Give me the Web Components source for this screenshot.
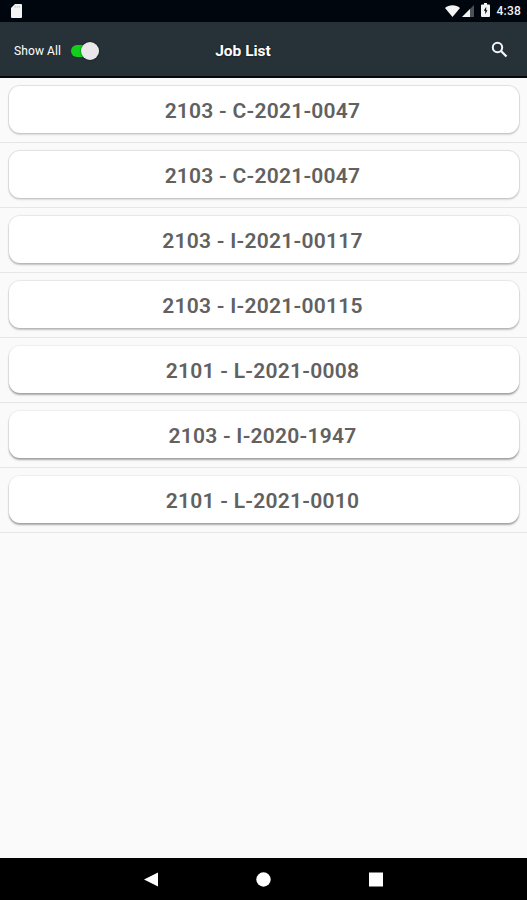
<!DOCTYPE html>
<html lang="en">
<head>
<meta charset="utf-8">
<title>Job List</title>
<style>
  html, body { margin: 0; height: 100%; }
  body { font-family: Roboto, sans-serif; background: #fafafa; overflow: hidden; }
</style>
</head>
<body>
<job-screen></job-screen>

<script>
function defineElement(name, html) {
  const template = document.createElement("template");
  template.innerHTML = html;

  customElements.define(name, class extends HTMLElement {
    constructor() {
      super();
      this.attachShadow({ mode: "open" });
      this.shadowRoot.appendChild(template.content.cloneNode(true));
    }
  });
}

defineElement("status-bar", `
  <style>
    :host {
      display: flex;
      align-items: center;
      box-sizing: border-box;
      height: 22px;
      padding: 0 6px 0 11px;
      background: #00060d;
      color: #f2f2f2;
      font-size: 12px;
      font-weight: 500;
      line-height: 22px;
    }
    svg { display: block; fill: #f4f4f4; }
    .card { margin-right: auto; }
    .wifi { margin-bottom: 1px; }
    .signal { margin-left: 2px; }
    .battery { margin: 0 7px 2px 7px; }
    .time { letter-spacing: 0.2px; }
  </style>
  <svg class="card" width="11" height="14" viewBox="0 0 11 14">
    <path d="M4 0h6a1 1 0 0 1 1 1v12a1 1 0 0 1-1 1H1a1 1 0 0 1-1-1V4z"/>
    <path d="M4.200 1.800v2M6.300 1.800v2M8.400 1.800v2" stroke="#b8bbbd" stroke-width=".8"/>
  </svg>
  <svg class="wifi" width="15" height="12" viewBox="0 0 15 12">
    <path d="M0 3C4-.7 11-.7 15 3L7.500 12z"/>
  </svg>
  <svg class="signal" width="12" height="12" viewBox="0 0 12 12">
    <path d="M12 0v12H0z" fill="#4b5156"/>
    <path d="M8 4v8H0z"/>
  </svg>
  <svg class="battery" width="9" height="14" viewBox="0 0 9 14">
    <path d="M3 0h3v1.500h2a1 1 0 0 1 1 1V13a1 1 0 0 1-1 1H1a1 1 0 0 1-1-1V2.500a1 1 0 0 1 1-1h2z"/>
    <path d="M5.200 3.800 2.800 7.800h1.500v3.400L6.400 7.200H5.200z" fill="#00060d"/>
  </svg>
  <span class="time"><slot></slot></span>
`);

defineElement("toggle-switch", `
  <style>
    :host { display: flex; align-items: center; width: 28px; height: 18px; }
    .track {
      display: flex;
      align-items: center;
      justify-content: flex-end;
      width: 28px;
      height: 12px;
      border-radius: 6px;
      background: #11cf1b;
    }
    .thumb {
      flex: none;
      width: 18px;
      height: 18px;
      border-radius: 50%;
      background: #e9e7ea;
      box-shadow: 0 0 1px 1px rgba(0, 0, 0, 0.25);
    }
  </style>
  <div class="track"><div class="thumb"></div></div>
`);

defineElement("app-toolbar", `
  <style>
    :host {
      display: grid;
      grid-template-columns: 1fr auto 1fr;
      align-items: center;
      box-sizing: border-box;
      height: 56px;
      padding: 3px 19px 0 14px;
      background: #263238;
      border-bottom: 2px solid #05090b;
      color: #fff;
    }
    .start { display: flex; align-items: center; gap: 10px; font-size: 12px; letter-spacing: 0.1px; }
    .title {
      margin-right: 36px;
      padding-top: 1px;
      font-size: 15.5px;
      font-weight: 700;
      text-shadow: 0 0 2px #0a1014;
    }
    svg { display: block; justify-self: end; margin-bottom: 3px; }
  </style>
  <div class="start"><slot name="label"></slot><toggle-switch></toggle-switch></div>
  <div class="title"><slot></slot></div>
  <svg width="17" height="17" viewBox="0 0 17 17" fill="none" stroke="#f5f5f5" stroke-width="2">
    <circle cx="6.500" cy="6.500" r="4.700"/>
    <path d="M10 10l5.500 5.500" stroke-width="2.300"/>
  </svg>
`);

defineElement("job-row", `
  <style>
    :host {
      display: block;
      box-sizing: border-box;
      height: 65px;
      padding: 8px 8px 0 9px;
      border-bottom: 1px solid #e6e6e6;
    }
    .card {
      box-sizing: border-box;
      height: 47px;
      padding-right: 3px;
      border-radius: 11px;
      background: #fff;
      box-shadow:
        0 0 1px 1px rgba(0, 0, 0, var(--edge, 0.11)),
        0 2px 2px rgba(0, 0, 0, var(--drop, 0.12));
      color: #616161;
      font-size: 21px;
      font-weight: 600;
      letter-spacing: 0.25px;
      line-height: 51px;
      text-align: center;
      white-space: nowrap;
    }
  </style>
  <div class="card"><slot></slot></div>
`);

defineElement("nav-bar", `
  <style>
    :host {
      display: flex;
      align-items: center;
      justify-content: center;
      gap: 98px;
      height: 42px;
      background: #000;
    }
    svg { display: block; fill: #fff; }
  </style>
  <svg width="14" height="15" viewBox="0 0 14 15"><path d="M14 .5v14L0 7.500z"/></svg>
  <svg width="15" height="15" viewBox="0 0 15 15"><circle cx="7.500" cy="7.500" r="7.200"/></svg>
  <svg width="14" height="15" viewBox="0 0 14 15"><path d="M0 .5h14v14H0z"/></svg>
`);

defineElement("job-screen", `
  <style>
    :host { display: flex; flex-direction: column; height: 900px; }
    main { flex: 1; background: #fafafa; }
    /* the light sits at the top, so the drop shadow grows down the list */
    job-row:nth-child(n + 3) { --edge: 0.08; --drop: 0.22; }
    job-row:nth-child(n + 5) { --edge: 0.05; --drop: 0.32; }
  </style>
  <status-bar>4:38</status-bar>
  <app-toolbar><span slot="label">Show All</span>Job List</app-toolbar>
  <main>
    <job-row>2103 - C-2021-0047</job-row>
    <job-row>2103 - C-2021-0047</job-row>
    <job-row>2103 - I-2021-00117</job-row>
    <job-row>2103 - I-2021-00115</job-row>
    <job-row>2101 - L-2021-0008</job-row>
    <job-row>2103 - I-2020-1947</job-row>
    <job-row>2101 - L-2021-0010</job-row>
  </main>
  <nav-bar></nav-bar>
`);
</script>
</body>
</html>
